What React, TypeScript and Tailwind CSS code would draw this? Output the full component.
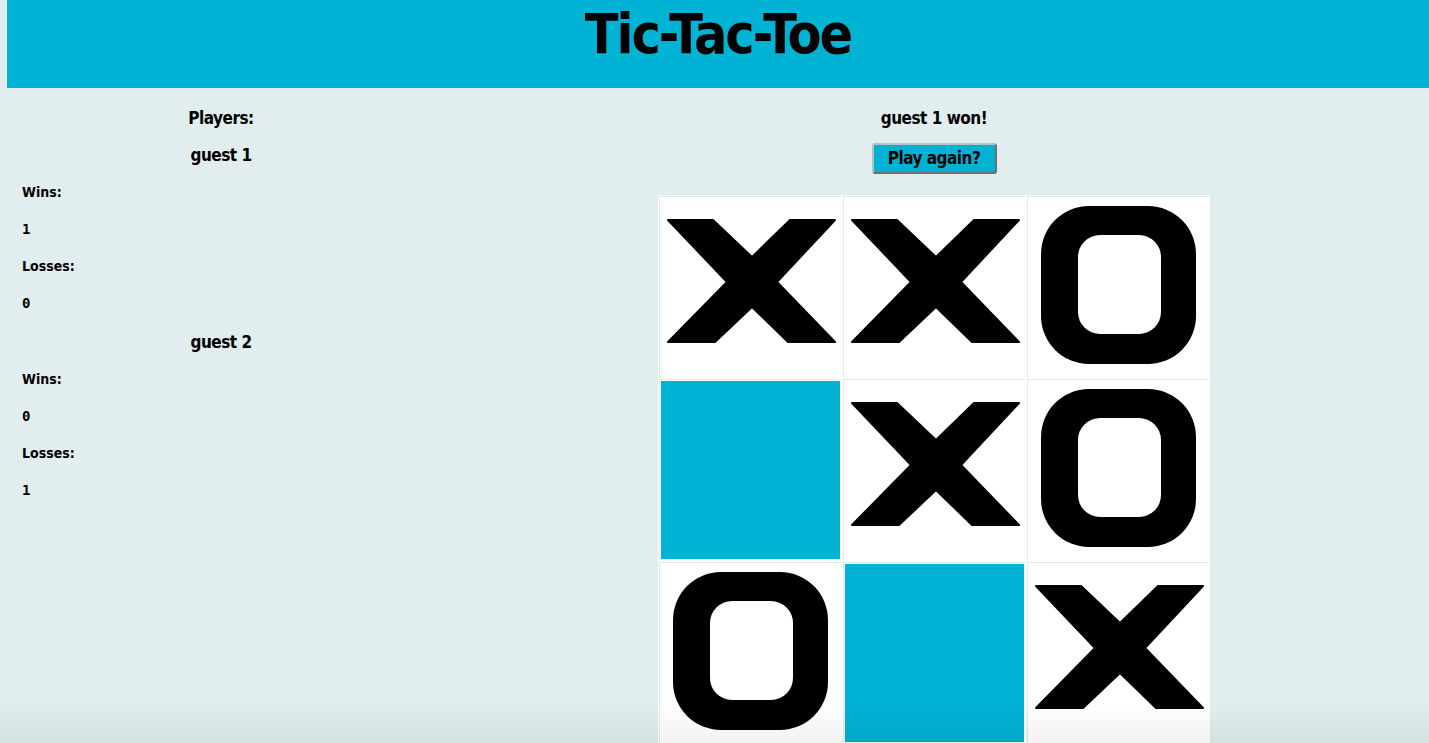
import React from 'react';

type Mark = 'X' | 'O' | null;

const board: Mark[] = ['X', 'X', 'O', null, 'X', 'O', 'O', null, 'X'];

const narrow = { fontFamily: '"Liberation Sans Narrow", "DejaVu Sans Condensed", "Roboto Condensed", "Liberation Sans", sans-serif' };

const XMark = () => (
  <svg width="184" height="183" viewBox="0 0 184 183" className="block">
    <polygon
      points="10,25 55,25 94,62 132,25 177,25 119,87 177,147 130,147 94,112 57,147 10,147 69,87"
      fill="#000"
      stroke="#000"
      strokeWidth="2"
      strokeLinejoin="round"
    />
  </svg>
);

const OMark = () => (
  <svg width="184" height="183" viewBox="0 0 184 183" className="block">
    <rect x="15" y="11" width="155" height="158" rx="48" fill="#000" />
    <rect x="52" y="40" width="83" height="99" rx="22" fill="#fff" />
  </svg>
);

const Cell = ({ mark }: { mark: Mark }) => (
  <div className="w-[184px] h-[183px] bg-white p-px">
    <div className="w-full h-full border-l border-t border-[#dcebeb] overflow-hidden">
      {mark === null ? (
        <div className="w-full h-full bg-[#00b2d4] border border-white" />
      ) : (
        <div className="-ml-[2px] -mt-[2px]">{mark === 'X' ? <XMark /> : <OMark />}</div>
      )}
    </div>
  </div>
);

const Stat = ({ label, value }: { label: string; value: number }) => (
  <>
    <div className="h-[37px] flex items-center pl-[22px] text-[14px] font-semibold text-black" style={narrow}>{label}</div>
    <div className="h-[37px] flex items-center pl-[22px] text-[14px] font-bold text-black" style={{ fontFamily: '"DejaVu Sans Mono", "Liberation Mono", monospace' }}>{value}</div>
  </>
);

const PlayerBlock = ({ name, wins, losses, className = '' }: { name: string; wins: number; losses: number; className?: string }) => (
  <div className={className}>
    <div className="h-[37px] flex items-center justify-center text-[17px] font-bold text-black tracking-[-0.5px]" style={narrow}>{name}</div>
    <Stat label="Wins:" value={wins} />
    <Stat label="Losses:" value={losses} />
  </div>
);

export default function App() {
  return (
    <div className="min-h-screen bg-[#e1edef] overflow-hidden">
      <header className="ml-[7px] h-[88px] bg-[#00b2d4] flex justify-center">
        <h1 className="text-[55px] leading-none pt-[7px] font-bold text-black tracking-[-2px]" style={narrow}>
          Tic-Tac-Toe
        </h1>
      </header>

      <main className="flex">
        <section className="w-[442px] shrink-0 pt-[12px]">
          <div className="h-[37px] flex items-center justify-center text-[17px] font-bold text-black tracking-[-0.5px]" style={narrow}>Players:</div>
          <PlayerBlock name="guest 1" wins={1} losses={0} />
          <PlayerBlock name="guest 2" wins={0} losses={1} className="mt-[2px]" />
        </section>

        <section className="flex-1 flex flex-col items-center pt-[12px] pr-[3px]">
          <div className="h-[37px] flex items-center text-[17px] font-bold text-black tracking-[-0.5px]" style={narrow}>guest 1 won!</div>
          <button
            className="mt-[6px] w-[125px] h-[31px] bg-[#00b2d4] border-2 border-t-[#b5c3c5] border-l-[#b5c3c5] border-r-[#6f6f6f] border-b-[#6f6f6f] rounded-[3px] text-[17px] font-bold text-black tracking-[-0.5px]"
            style={narrow}
          >
            Play again?
          </button>
          <div className="mt-[21px] grid grid-cols-3">
            {board.map((m, i) => (
              <Cell key={i} mark={m} />
            ))}
          </div>
        </section>
      </main>

      <div className="fixed bottom-0 left-0 right-0 h-[40px] pointer-events-none bg-gradient-to-b from-transparent to-black/5" />
    </div>
  );
}
